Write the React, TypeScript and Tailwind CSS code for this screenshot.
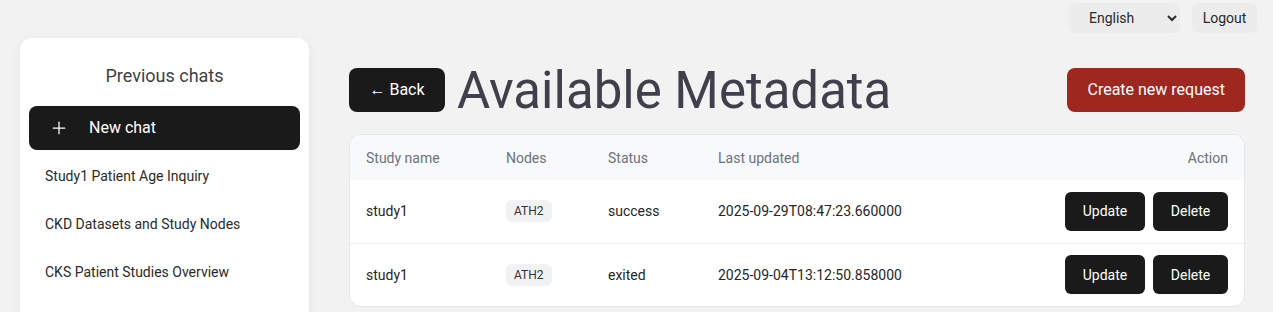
import React from "react";
import { Plus } from "lucide-react";

const chats = ["Study1 Patient Age Inquiry", "CKD Datasets and Study Nodes", "CKS Patient Studies Overview"];

const rows = [
  { name: "study1", node: "ATH2", status: "success", updated: "2025-09-29T08:47:23.660000" },
  { name: "study1", node: "ATH2", status: "exited", updated: "2025-09-04T13:12:50.858000" },
];

const App = () => {
  return (
    <div className="min-h-[312px] h-[312px] overflow-hidden bg-[#f2f2f2] text-[#1f1f1f]" style={{ fontFamily: "Roboto, 'Liberation Sans', sans-serif" }}>
      <div className="flex justify-end items-center gap-3 pt-[3px] pr-4 h-[33px]">
        <select className="h-[30px] w-[111px] rounded-md bg-[#ececec] pl-4 pr-2 text-sm text-[#2a2a2a] outline-none">
          <option>English</option>
        </select>
        <button className="h-[30px] w-[65px] rounded-md bg-[#ececec] text-sm text-[#2a2a2a]">Logout</button>
      </div>

      <div className="flex mt-[5px]">
        <aside className="ml-5 w-[289px] h-[300px] shrink-0 bg-white rounded-xl shadow-[0_2px_10px_rgba(0,0,0,0.06)] px-[9px] pt-6">
          <h2 className="text-center text-lg leading-7 text-[#3f3f46]">Previous chats</h2>
          <button className="mt-4 w-full h-11 rounded-lg bg-[#1a1a1a] text-white flex items-center pl-[20px] gap-5 text-base">
            <Plus className="w-5 h-5" strokeWidth={1.5} />
            New chat
          </button>
          <ul className="mt-0.5">
            {chats.map((c) => (
              <li key={c} className="h-12 flex items-center px-4 text-sm text-[#2a2a2a]">{c}</li>
            ))}
          </ul>
        </aside>

        <main className="flex-1 ml-10 mr-7 pt-[30px]">
          <div className="flex h-11 items-center justify-between">
            <div className="flex items-center gap-3">
              <button className="h-11 w-24 rounded-lg bg-[#1a1a1a] text-white text-base">← Back</button>
              <h1 className="text-[51px] text-[#40404d] leading-none">Available Metadata</h1>
            </div>
            <button className="h-11 px-5 rounded-lg bg-[#9e2820] text-white text-base">Create new request</button>
          </div>

          <div className="mt-[22px] bg-white rounded-xl border border-[#e6e7ea] overflow-hidden">
            <table className="w-full text-sm text-left">
              <thead className="bg-[#f8f9fa] text-[#6b7280]">
                <tr className="h-[45px]">
                  <th className="font-normal pl-4 w-[140px]">Study name</th>
                  <th className="font-normal pl-4 w-[102px]">Nodes</th>
                  <th className="font-normal pl-4 w-[110px]">Status</th>
                  <th className="font-normal pl-4">Last updated</th>
                  <th className="font-normal pr-4 text-right">Action</th>
                </tr>
              </thead>
              <tbody className="text-[#262626]">
                {rows.map((r, i) => (
                  <tr key={i} className={`h-[63px] ${i > 0 ? "border-t border-[#eeeff1]" : ""}`}>
                    <td className="pl-4">{r.name}</td>
                    <td className="pl-4">
                      <span className="inline-block rounded-md bg-[#f1f2f4] px-2 py-[3px] text-xs text-[#333]">{r.node}</span>
                    </td>
                    <td className="pl-4">{r.status}</td>
                    <td className="pl-4">{r.updated}</td>
                    <td className="pr-4">
                      <div className="flex justify-end gap-2">
                        <button className="h-[39px] w-20 rounded-md bg-[#1a1a1a] text-white text-sm">Update</button>
                        <button className="h-[39px] w-[75px] rounded-md bg-[#1a1a1a] text-white text-sm">Delete</button>
                      </div>
                    </td>
                  </tr>
                ))}
              </tbody>
            </table>
          </div>
        </main>
      </div>
    </div>
  );
};

export default App;
